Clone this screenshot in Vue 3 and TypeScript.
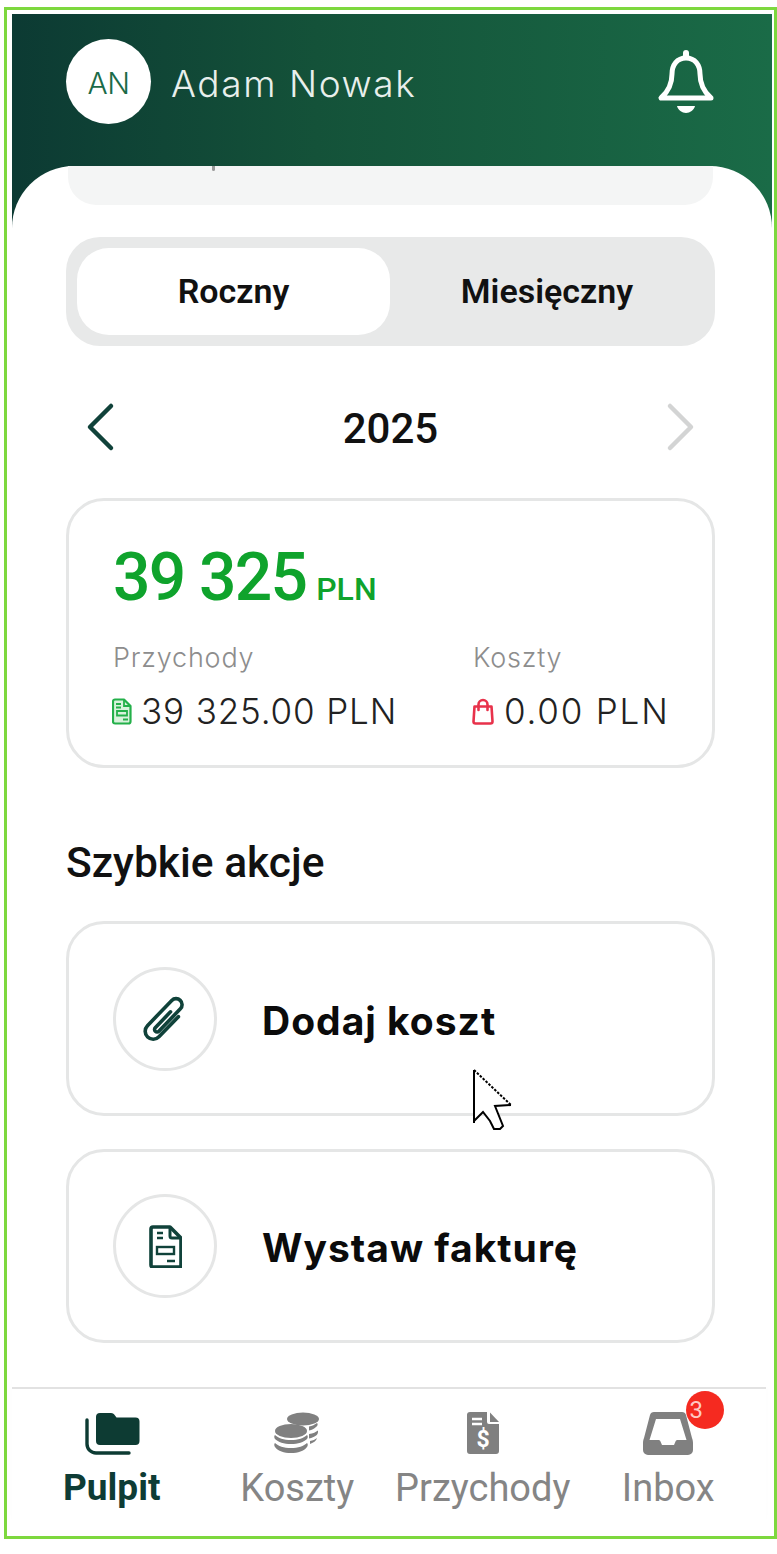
<script setup lang="ts">
interface NavItem { label: string; active?: boolean }
const nav: NavItem[] = [
  { label: 'Pulpit', active: true },
  { label: 'Koszty' },
  { label: 'Przychody' },
  { label: 'Inbox' },
]
</script>

<template>
  <div class="page">
    <div class="frame">
      <div class="phone">
        <header class="head">
          <div class="avatar">AN</div>
          <div class="name">Adam Nowak</div>
          <svg class="bell" width="58" height="66" viewBox="0 0 58 66" fill="none">
            <path d="M29 9C20 9 15 16 15 25c0 10-3 17-11 24h50c-8-7-11-14-11-24 0-9-5-16-14-16z" stroke="#fff" stroke-width="5" stroke-linejoin="round"/>
            <path d="M29 4v4" stroke="#fff" stroke-width="6" stroke-linecap="round"/>
            <path d="M20 57h18c-1 4-5 7-9 7s-8-3-9-7z" fill="#fff"/>
          </svg>
        </header>

        <main class="sheet">
          <div class="ghost"><span class="ghost-mark"></span></div>

          <div class="segment">
            <div class="seg active">Roczny</div>
            <div class="seg">Miesięczny</div>
          </div>

          <div class="year-row">
            <svg width="36" height="54" viewBox="0 0 36 54" fill="none">
              <path d="M28 5 7 26l21 21" stroke="#10423a" stroke-width="4.500" stroke-linecap="round" stroke-linejoin="round"/>
            </svg>
            <div class="year">2025</div>
            <svg width="36" height="54" viewBox="0 0 36 54" fill="none">
              <path d="m8 5 21 21L8 47" stroke="#d3d4d4" stroke-width="4.500" stroke-linecap="round" stroke-linejoin="round"/>
            </svg>
          </div>

          <section class="summary">
            <div class="total"><span class="total-num">39 325</span><span class="total-cur">PLN</span></div>
            <div class="split">
              <div>
                <div class="cap">Przychody</div>
                <div class="val">
                  <svg width="20" height="27" viewBox="0 0 20 27" fill="none">
                    <path d="M3 1.500h9l6.500 6.500v15.500a2 2 0 0 1-2 2H3a2 2 0 0 1-2-2V3.500a2 2 0 0 1 2-2z" fill="#d9f2dc" stroke="#24b04a" stroke-width="2.200" stroke-linejoin="round"/>
                    <path d="M12 2v6h6.500M4 6h5M4 9.500h5M5 13h10v4.500H5zM11 21.500h5" stroke="#24b04a" stroke-width="1.800"/>
                  </svg>
                  <span>39 325.00 PLN</span>
                </div>
              </div>
              <div>
                <div class="cap">Koszty</div>
                <div class="val red">
                  <svg width="24" height="27" viewBox="0 0 24 27" fill="none">
                    <path d="M3.500 8.500h17l1 15a2 2 0 0 1-2 2h-15a2 2 0 0 1-2-2z" stroke="#e8324b" stroke-width="2.600" stroke-linejoin="round"/>
                    <path d="M7.500 12V6.500a4.500 4.500 0 0 1 9 0V12" stroke="#e8324b" stroke-width="2.600" stroke-linecap="round"/>
                  </svg>
                  <span>0.00 PLN</span>
                </div>
              </div>
            </div>
          </section>

          <h2 class="title">Szybkie akcje</h2>

          <button class="action" type="button">
            <span class="disc">
              <svg class="clip" width="44" height="46" viewBox="0 0 44 46" fill="none">
                <g transform="rotate(44 22 23)" stroke="#10423a" stroke-width="3.600" stroke-linecap="round" stroke-linejoin="round">
                  <path d="M30 12v28a8 8 0 0 1-16 0V5a6 6 0 0 1 12 0v31a2.500 2.500 0 0 1-5 0V14"/>
                </g>
              </svg>
            </span>
            <span class="action-label">Dodaj koszt</span>
          </button>

          <button class="action second" type="button">
            <span class="disc">
              <svg width="34" height="44" viewBox="-1 -1 34 44" fill="none">
                <path d="M4 2h17l11 11v27a2 2 0 0 1-2 2H4a2 2 0 0 1-2-2V4a2 2 0 0 1 2-2z" stroke="#10423a" stroke-width="3.600" stroke-linejoin="round"/>
                <path d="M21 2v9a2 2 0 0 0 2 2h9" stroke="#10423a" stroke-width="3" stroke-linejoin="round"/>
                <path d="M8 8h6M8 13h6M18 36h8" stroke="#10423a" stroke-width="2.400"/>
                <rect x="8" y="22" width="17" height="7" stroke="#10423a" stroke-width="2.400"/>
              </svg>
            </span>
            <span class="action-label">Wystaw fakturę</span>
          </button>
        </main>

        <nav class="nav">
          <div v-for="(item, i) in nav" :key="item.label" class="tab" :class="{ on: item.active }">
            <span class="tab-icon">
              <svg v-if="i === 0" width="56" height="44" viewBox="0 0 56 44" fill="none">
                <path d="M12 6a4 4 0 0 1 4-4h11c2 0 3 1 4 2.500l1.500 2h19a4 4 0 0 1 4 4V30a4 4 0 0 1-4 4H16a4 4 0 0 1-4-4z" fill="#0d3b33"/>
                <path d="M3 9v24a9 9 0 0 0 9 9h33" stroke="#0d3b33" stroke-width="3.400" stroke-linecap="round"/>
              </svg>
              <svg v-else-if="i === 1" width="46" height="44" viewBox="0 0 46 44" fill="#808080">
                <ellipse cx="29" cy="8" rx="16" ry="6.500"/>
                <path d="M42 16c-2 2-4 3-7 3.500v-4c3-.5 6-2 8-3.500 1 1 1 2.500-1 4zM44 21c0 3-3 5-9 6.500V23c4-.5 7-2 9-3.500zM36 30c3-.500 5-1.500 7-3-.5 2.500-3 4.500-7 6z"/>
                <ellipse cx="17" cy="20" rx="16" ry="7"/>
                <path d="M1 24c3 3 9 5 16 5s13-2 16-5c1 1 1 2.500 0 4-3 3-9 5-16 5S4 31 1 28c-1-1.500-1-3 0-4z"/>
                <path d="M1 32c3 3 9 5 16 5s13-2 16-5c1 1 1 2.500 0 4-3 4-9 6-16 6S4 40 1 36c-1-1.500-1-3 0-4z"/>
              </svg>
              <svg v-else-if="i === 2" width="34" height="44" viewBox="0 0 34 44">
                <path d="M4 1h17v10a2 2 0 0 0 2 2h10v27a3 3 0 0 1-3 3H4a3 3 0 0 1-3-3V4a3 3 0 0 1 3-3z" fill="#808080"/>
                <path d="M24 1.500 33 11h-9z" fill="#808080"/>
                <path d="M6 8h10M6 13h10" stroke="#fff" stroke-width="2.400"/>
                <text x="17" y="36" text-anchor="middle" class="dollar">$</text>
              </svg>
              <svg v-else width="50" height="44" viewBox="0 0 50 44">
                <path fill-rule="evenodd" fill="#808080" d="M11 1h28c2 0 3.500 1 4 3l6 23c.7 2 1 3 1 5v7a5 5 0 0 1-5 5H5a5 5 0 0 1-5-5v-7c0-2 .3-3 1-5L7 4c.5-2 2-3 4-3zm2 7-6.500 21h9c1 0 1.500 .5 2 1.500L19 34h12l1.500-3.500c.5-1 1-1.500 2-1.500h9L37 8z"/>
              </svg>
              <span v-if="i === 3" class="badge">3</span>
            </span>
            <span class="tab-label">{{ item.label }}</span>
          </div>
        </nav>

        <svg class="cursor" width="42" height="64" viewBox="0 0 42 64" fill="none" stroke="#000" stroke-width="2">
          <path d="M1 2v53l9-10 10 15h10l-8-21 16-2z" fill="#fff" stroke="none"/>
          <path d="M1 2v53"/>
          <path d="M1 2l37 35" stroke-dasharray="2.500 1.500"/>
          <path d="M38 37l-16 1 8 20-3 3h-6l-4-8-7-9-10 10" stroke-linejoin="miter"/>
        </svg>
      </div>
    </div>
  </div>
</template>

<style>
html, body { margin: 0; background: #fff; }
</style>

<style scoped>
.page {
  width: 777px;
  height: 1554px;
  box-sizing: border-box;
  padding: 7px 0 15px 4px;
  background: #fff;
  font-family: "Roboto", "Liberation Sans", sans-serif;
}
.frame {
  height: 100%;
  box-sizing: border-box;
  border: 3px solid #7dd83e;
  padding: 4px 2px 0 5px;
}
.phone {
  position: relative;
  height: 100%;
  display: flex;
  flex-direction: column;
  background: linear-gradient(90deg, #0c3a33 0%, #145239 40%, #1a6b47 100%) no-repeat;
  background-size: 100% 240px;
}
.head {
  height: 152px;
  flex: none;
  box-sizing: border-box;
  padding: 25px 57px 0 54px;
  display: flex;
  align-items: flex-start;
}
.avatar {
  width: 85px;
  height: 85px;
  border-radius: 50%;
  background: #fff;
  color: #1b6b48;
  font: 300 30px/88px "Inter", sans-serif;
  text-align: center;
  letter-spacing: -0.6px;
}
.name {
  margin-left: 20px;
  flex: 1;
  color: #e8efec;
  font: 300 37px/89px "Inter", sans-serif;
  letter-spacing: 1.600px;
}
.bell { margin-top: 10px; }
.sheet {
  position: relative;
  flex: 1;
  min-height: 0;
  background: #fff;
  border-radius: 62px 62px 0 0;
  box-sizing: border-box;
  padding: 0 57px 0 54px;
}
.ghost {
  position: relative;
  height: 39px;
  background: #f4f5f5;
  border-radius: 0 0 28px 28px;
  margin: 0 2px;
}
.ghost-mark {
  position: absolute;
  left: 144px;
  top: 0;
  width: 3px;
  height: 5px;
  border-radius: 0 0 3px 3px;
  background: #9a9a9a;
}
.segment {
  margin-top: 32px;
  height: 109px;
  box-sizing: border-box;
  padding: 11px;
  border-radius: 34px;
  background: #e8e9e9;
  display: grid;
  grid-template-columns: 313px 1fr;
}
.seg {
  border-radius: 32px;
  text-align: center;
  font-size: 34px;
  font-weight: 600;
  line-height: 87px;
  color: #111;
}
.seg.active { background: #fff; }
.year-row {
  height: 152px;
  box-sizing: border-box;
  padding: 0 17px 0 17px;
  display: flex;
  align-items: center;
  justify-content: space-between;
}
.year-row svg { margin-top: 12px; }
.year {
  font-size: 42px;
  font-weight: 500;
  color: #111;
  margin-top: 12px;
}
.summary {
  height: 270px;
  box-sizing: border-box;
  border: 3px solid #e5e6e6;
  border-radius: 38px;
  padding: 38px 0 0 44px;
}
.total {
  display: flex;
  align-items: baseline;
  color: #0fa32c;
  line-height: 78px;
}
.total-num { font-size: 66px; font-weight: 500; letter-spacing: -1.800px; }
.total-cur { font-size: 32px; font-weight: 500; margin-left: 10px; }
.split {
  margin-top: 10px;
  display: grid;
  grid-template-columns: 360px 1fr;
}
.cap {
  font: 300 27px/40px "Inter", sans-serif;
  letter-spacing: 0.8px;
  color: #8d8d8d;
}
.val {
  margin-top: 13px;
  display: flex;
  align-items: center;
  gap: 9px;
  margin-left: -1px;
  font: 300 35px/40px "Inter", sans-serif;
  letter-spacing: 0.85px;
  color: #222;
}
.val.red { margin-left: -2px; gap: 9px; letter-spacing: 1.800px; }
.title {
  margin: 0;
  padding-top: 73px;
  height: 153px;
  box-sizing: border-box;
  font-size: 42.500px;
  font-weight: 500;
  line-height: 44px;
  color: #111;
}
.action {
  display: flex;
  align-items: center;
  width: 100%;
  height: 195px;
  box-sizing: border-box;
  padding: 0 0 0 44px;
  background: #fff;
  border: 3px solid #e5e6e6;
  border-radius: 38px;
  font: inherit;
}
.second { margin-top: 33px; height: 194px; }
.disc {
  width: 104px;
  height: 104px;
  flex: none;
  box-sizing: border-box;
  border: 3px solid #e5e6e6;
  border-radius: 50%;
  display: flex;
  align-items: center;
  justify-content: center;
}
.clip { overflow: visible; }
.action-label {
  margin-left: 45px;
  margin-top: 4px;
  font: 700 39px/44px "Inter", sans-serif;
  letter-spacing: 1px;
  color: #0b0b0b;
}
.nav {
  flex: none;
  height: 149px;
  margin-right: 6px;
  box-sizing: border-box;
  border-top: 2px solid #e2e2e2;
  background: #fff;
  padding-left: 7px;
  display: grid;
  grid-template-columns: repeat(4, 185.5px);
  box-shadow: 0 -12px 10px -4px rgba(0, 0, 0, 0.03);
}
.tab {
  display: flex;
  flex-direction: column;
  align-items: center;
  padding-top: 22px;
  color: #858585;
}
.tab.on { color: #0e3c35; }
.tab-icon {
  position: relative;
  height: 44px;
  display: block;
}
.tab-icon svg { display: block; }
.tab-label {
  margin-top: 11px;
  font-size: 38px;
  line-height: 44px;
  font-weight: 400;
}
.on .tab-label { font-size: 37px; font-weight: 700; }
.dollar {
  font: 700 23px "Roboto", sans-serif;
  fill: #fff;
}
.badge {
  position: absolute;
  left: 43px;
  top: -20px;
  width: 38px;
  height: 38px;
  border-radius: 50%;
  background: #f52a20;
  color: #ffc9c4;
  font: 400 24px/38px "Roboto", sans-serif;
  text-indent: -18px;
  text-align: center;
}
.cursor {
  position: absolute;
  left: 461px;
  top: 1054px;
}
</style>
